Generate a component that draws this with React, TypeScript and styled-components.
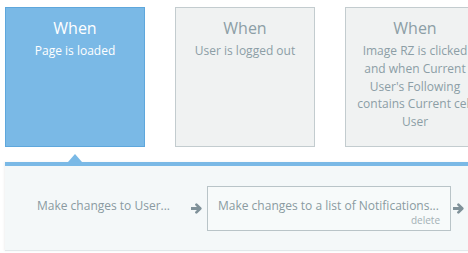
import React from "react";
import styled, { createGlobalStyle } from "styled-components";

const GlobalStyle = createGlobalStyle`
  html, body {
    margin: 0;
    padding: 0;
    background: #ffffff;
    font-family: "Open Sans", "Noto Sans", sans-serif;
  }
`;

type Trigger = { title: string; condition: string; active?: boolean };

const triggers: Trigger[] = [
  { title: "When", condition: "Page is loaded", active: true },
  { title: "When", condition: "User is logged out" },
  {
    title: "When",
    condition:
      "Image RZ is clicked and when Current User's Following contains Current cell User",
  },
];

// bold right arrow between steps
const Arrow = () => (
  <ArrowIcon viewBox="0 0 11 11" aria-hidden>
    <path d="M0 4h8v3H0z" fill="currentColor" />
    <path
      d="M5.4 1.6L9.3 5.5 5.4 9.4"
      fill="none"
      stroke="currentColor"
      strokeWidth="2.6"
      strokeLinecap="round"
      strokeLinejoin="round"
    />
  </ArrowIcon>
);

const App = () => {
  return (
    <Page>
      <GlobalStyle />
      <TriggerRow>
        {triggers.map((t, i) => (
          <TriggerCard key={i} $active={t.active}>
            <CardTitle>{t.title}</CardTitle>
            <CardCondition>{t.condition}</CardCondition>
          </TriggerCard>
        ))}
      </TriggerRow>
      <ActionPanel>
        <ActionStep>
          <StepLabel>Make changes to User...</StepLabel>
        </ActionStep>
        <Arrow />
        <ActionStep $boxed>
          <StepLabel>Make changes to a list of Notifications...</StepLabel>
          <DeleteLink>delete</DeleteLink>
        </ActionStep>
        <Arrow />
      </ActionPanel>
    </Page>
  );
};

const Page = styled.div`
  width: 468px;
  height: 253px;
  overflow: hidden;
  padding: 7px 0 0 5px;
  box-sizing: border-box;
`;

const TriggerRow = styled.div`
  display: flex;
  gap: 30px;
`;

const TriggerCard = styled.div<{ $active?: boolean }>`
  flex: 0 0 140px;
  height: 140px;
  box-sizing: border-box;
  padding: 10px 10px 0;
  text-align: center;
  background: ${(p) => (p.$active ? "#7ab9e6" : "#f0f2f2")};
  border: 1px solid ${(p) => (p.$active ? "#5ea7dc" : "#c3cccf")};
  color: ${(p) => (p.$active ? "#ffffff" : "#8c9ea6")};
`;

const CardTitle = styled.div`
  font-size: 16px;
  line-height: 20px;
`;

const CardCondition = styled.div`
  margin-top: 4px;
  font-size: 12px;
  line-height: 17.8px;
`;

const ActionPanel = styled.div`
  position: relative;
  margin-top: 15px;
  height: 89px;
  width: 520px;
  box-sizing: border-box;
  display: flex;
  align-items: center;
  padding-left: 21px;
  background: #f4f8f9;
  border-top: 4px solid #7ab9e6;
  border-bottom: 1px solid #e1e8ea;
  box-shadow: -1px 0 2px rgba(0, 0, 0, 0.06);

  &::before {
    content: "";
    position: absolute;
    left: 63px;
    top: -12px;
    border-left: 7px solid transparent;
    border-right: 7px solid transparent;
    border-bottom: 8px solid #7ab9e6;
  }
`;

const ActionStep = styled.div<{ $boxed?: boolean }>`
  flex: 0 0 auto;
  width: ${(p) => (p.$boxed ? "244px" : "163px")};
  height: 45px;
  box-sizing: border-box;
  padding: 10px 10px 0;
  border: 1px solid ${(p) => (p.$boxed ? "#b9c4c8" : "transparent")};
  background: ${(p) => (p.$boxed ? "#f7fafa" : "transparent")};
  display: flex;
  flex-direction: column;
`;

const StepLabel = styled.div`
  font-size: 12px;
  line-height: 17px;
  color: #8a9aa1;
  white-space: nowrap;
`;

const DeleteLink = styled.div`
  align-self: flex-end;
  font-size: 10px;
  line-height: 12px;
  color: #a3b0b5;
`;

const ArrowIcon = styled.svg`
  flex: 0 0 auto;
  width: 11px;
  height: 11px;
  margin: 0 5px 0 2px;
  color: #7f9199;
`;

export default App;
